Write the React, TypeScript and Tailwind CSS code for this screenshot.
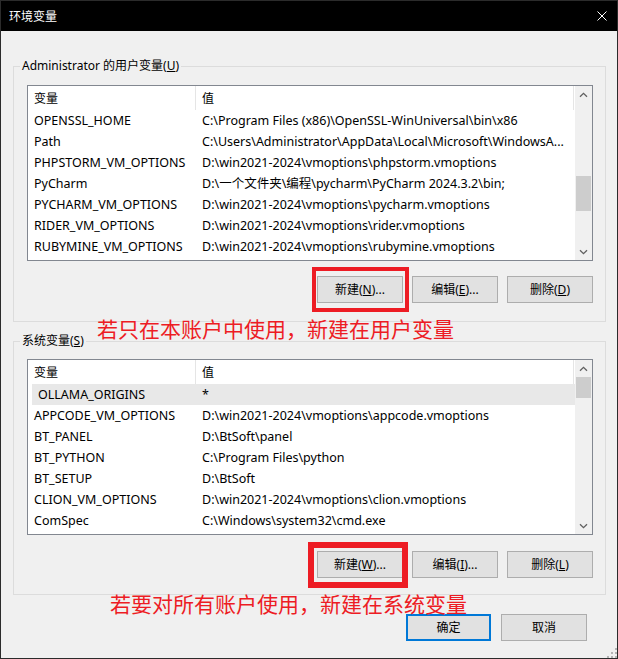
import React from "react";

const F = "font-['Noto_Sans','Noto_Sans_CJK_SC',sans-serif]";
const CJK = "font-['Noto_Sans_CJK_SC',sans-serif]";

const userRows: [string, string][] = [
  ["OPENSSL_HOME", "C:\\Program Files (x86)\\OpenSSL-WinUniversal\\bin\\x86"],
  ["Path", "C:\\Users\\Administrator\\AppData\\Local\\Microsoft\\WindowsA..."],
  ["PHPSTORM_VM_OPTIONS", "D:\\win2021-2024\\vmoptions\\phpstorm.vmoptions"],
  ["PyCharm", "D:\\一个文件夹\\编程\\pycharm\\PyCharm 2024.3.2\\bin;"],
  ["PYCHARM_VM_OPTIONS", "D:\\win2021-2024\\vmoptions\\pycharm.vmoptions"],
  ["RIDER_VM_OPTIONS", "D:\\win2021-2024\\vmoptions\\rider.vmoptions"],
  ["RUBYMINE_VM_OPTIONS", "D:\\win2021-2024\\vmoptions\\rubymine.vmoptions"],
];

const sysRows: [string, string][] = [
  ["APPCODE_VM_OPTIONS", "D:\\win2021-2024\\vmoptions\\appcode.vmoptions"],
  ["BT_PANEL", "D:\\BtSoft\\panel"],
  ["BT_PYTHON", "C:\\Program Files\\python"],
  ["BT_SETUP", "D:\\BtSoft"],
  ["CLION_VM_OPTIONS", "D:\\win2021-2024\\vmoptions\\clion.vmoptions"],
  ["ComSpec", "C:\\Windows\\system32\\cmd.exe"],
];

function Arrow({ down }: { down?: boolean }) {
  return (
    <div className="h-[17px] shrink-0 flex items-center justify-center">
      <svg width="9" height="6" viewBox="0 0 9 6">
        <polyline
          points={down ? "1,1.2 4.5,4.7 8,1.2" : "1,4.8 4.5,1.3 8,4.8"}
          fill="none"
          stroke="#606060"
          strokeWidth="1.3"
        />
      </svg>
    </div>
  );
}

function Row({ name, value }: { name: string; value: string }) {
  return (
    <div className="h-[21px] shrink-0 flex items-center pt-[2px] text-[12.5px] text-black">
      <div className="w-[168px] shrink-0 pl-[6px] whitespace-nowrap overflow-hidden">{name}</div>
      <div className="flex-1 pl-[6px] whitespace-nowrap overflow-hidden">{value}</div>
    </div>
  );
}

function ListView({ children, thumb }: { children: React.ReactNode; thumb: string }) {
  return (
    <div className="w-[566px] h-[176px] border border-[#828790] bg-white flex">
      <div className="w-[547px] flex flex-col overflow-hidden">
        <div className="h-[24px] shrink-0 flex text-[12px] text-black">
          <div className="w-[168px] h-full border-r border-[#e5e5e5] pl-[6px] pt-[2px] flex items-center">变量</div>
          <div className="w-[378px] h-full border-r border-[#e5e5e5] pl-[6px] pt-[2px] flex items-center">值</div>
        </div>
        {children}
      </div>
      <div className="w-[17px] bg-[#f0f0f0] flex flex-col">
        <Arrow />
        <div className="flex-1 px-[1px]">
          <div className={thumb + " bg-[#cdcdcd]"} />
        </div>
        <Arrow down />
      </div>
    </div>
  );
}

function Btn({ children, primary }: { children: React.ReactNode; primary?: boolean }) {
  return (
    <div
      className={
        primary
          ? "w-[85px] h-[27px] bg-[#e1e1e1] border-2 border-[#0078d7] flex items-center justify-center text-[12px] text-black"
          : "w-[86px] h-[27px] bg-[#e1e1e1] border border-[#adadad] flex items-center justify-center text-[12px] text-black"
      }
    >
      {children}
    </div>
  );
}

export default function App() {
  return (
    <div className={"relative w-[618px] h-[659px] bg-[#f0f0f0] border border-[#2b2b2b] flex flex-col overflow-hidden " + F}>
      {/* title bar */}
      <div className="h-[30px] shrink-0 bg-black flex items-center justify-between pl-[8px] pr-[10px]">
        <span className={"text-[12px] text-white leading-[16px] " + CJK}>环境变量</span>
        <svg width="10" height="10" viewBox="0 0 10 10">
          <path d="M0.5 0.5 L9.5 9.5 M9.5 0.5 L0.5 9.5" stroke="#ffffff" strokeWidth="1" />
        </svg>
      </div>

      {/* user variables */}
      <fieldset className="mt-[27px] ml-[12px] w-[593px] border border-[#dcdcdc] px-[6px] pt-[11px] pb-[18px]">
        <legend className="px-[2px] text-[12px] leading-[16px] text-black">
          Administrator 的用户变量(<u>U</u>)
        </legend>
        <div className="pl-[7px]">
          <ListView thumb="mt-[73px] h-[35px]">
            {userRows.map(([n, v]) => (
              <Row key={n} name={n} value={v} />
            ))}
          </ListView>
          <div className="mt-[15px] w-[566px] flex justify-end gap-[9px]">
            <Btn>新建(<u>N</u>)...</Btn>
            <Btn>编辑(<u>E</u>)...</Btn>
            <Btn>删除(<u>D</u>)</Btn>
          </div>
        </div>
      </fieldset>

      {/* system variables */}
      <fieldset className="mt-[11px] ml-[12px] w-[593px] border border-[#dcdcdc] px-[6px] pt-[10px] pb-[16px]">
        <legend className="px-[2px] text-[12px] leading-[16px] text-black">
          系统变量(<u>S</u>)
        </legend>
        <div className="pl-[7px]">
          <ListView thumb="mt-0 h-[21px]">
            <div className="h-[21px] shrink-0 ml-[4px] bg-[#e8e8e8] flex items-center pt-[2px] text-[12.5px] text-black">
              <div className="w-[164px] shrink-0 pl-[6px] whitespace-nowrap">OLLAMA_ORIGINS</div>
              <div className="flex-1 pl-[6px]">*</div>
            </div>
            {sysRows.map(([n, v]) => (
              <Row key={n} name={n} value={v} />
            ))}
          </ListView>
          <div className="mt-[16px] w-[566px] flex justify-end gap-[9px]">
            <Btn>新建(<u>W</u>)...</Btn>
            <Btn>编辑(<u>I</u>)...</Btn>
            <Btn>删除(<u>L</u>)</Btn>
          </div>
        </div>
      </fieldset>

      {/* dialog buttons */}
      <div className="mt-[19px] pr-[30px] flex justify-end gap-[10px]">
        <Btn primary>确定</Btn>
        <Btn>取消</Btn>
      </div>

      {/* annotations (drawn on top of the screenshot) */}
      <div className="absolute left-[311px] top-[266px] w-[97px] h-[45px] border-[4px] border-[#ed1c24]" />
      <div className="absolute left-[307px] top-[541px] w-[100px] h-[46px] border-[6px] border-[#ed1c24]" />
      <div className={"absolute left-[96px] top-[317px] text-[21px] leading-[21px] text-[#ed1c24] whitespace-nowrap " + CJK}>
        若只在本账户中使用，新建在用户变量
      </div>
      <div className={"absolute left-[109px] top-[592px] text-[21px] leading-[21px] text-[#ed1c24] whitespace-nowrap " + CJK}>
        若要对所有账户使用，新建在系统变量
      </div>

      {/* size grip */}
      <svg className="absolute right-0 bottom-0" width="10" height="10" viewBox="0 0 10 10">
        <rect x="8" y="0" width="2" height="2" fill="#b4b4b4" />
        <rect x="4" y="4" width="2" height="2" fill="#b4b4b4" />
        <rect x="8" y="4" width="2" height="2" fill="#b4b4b4" />
        <rect x="0" y="8" width="2" height="2" fill="#b4b4b4" />
        <rect x="4" y="8" width="2" height="2" fill="#b4b4b4" />
        <rect x="8" y="8" width="2" height="2" fill="#b4b4b4" />
      </svg>
    </div>
  );
}
